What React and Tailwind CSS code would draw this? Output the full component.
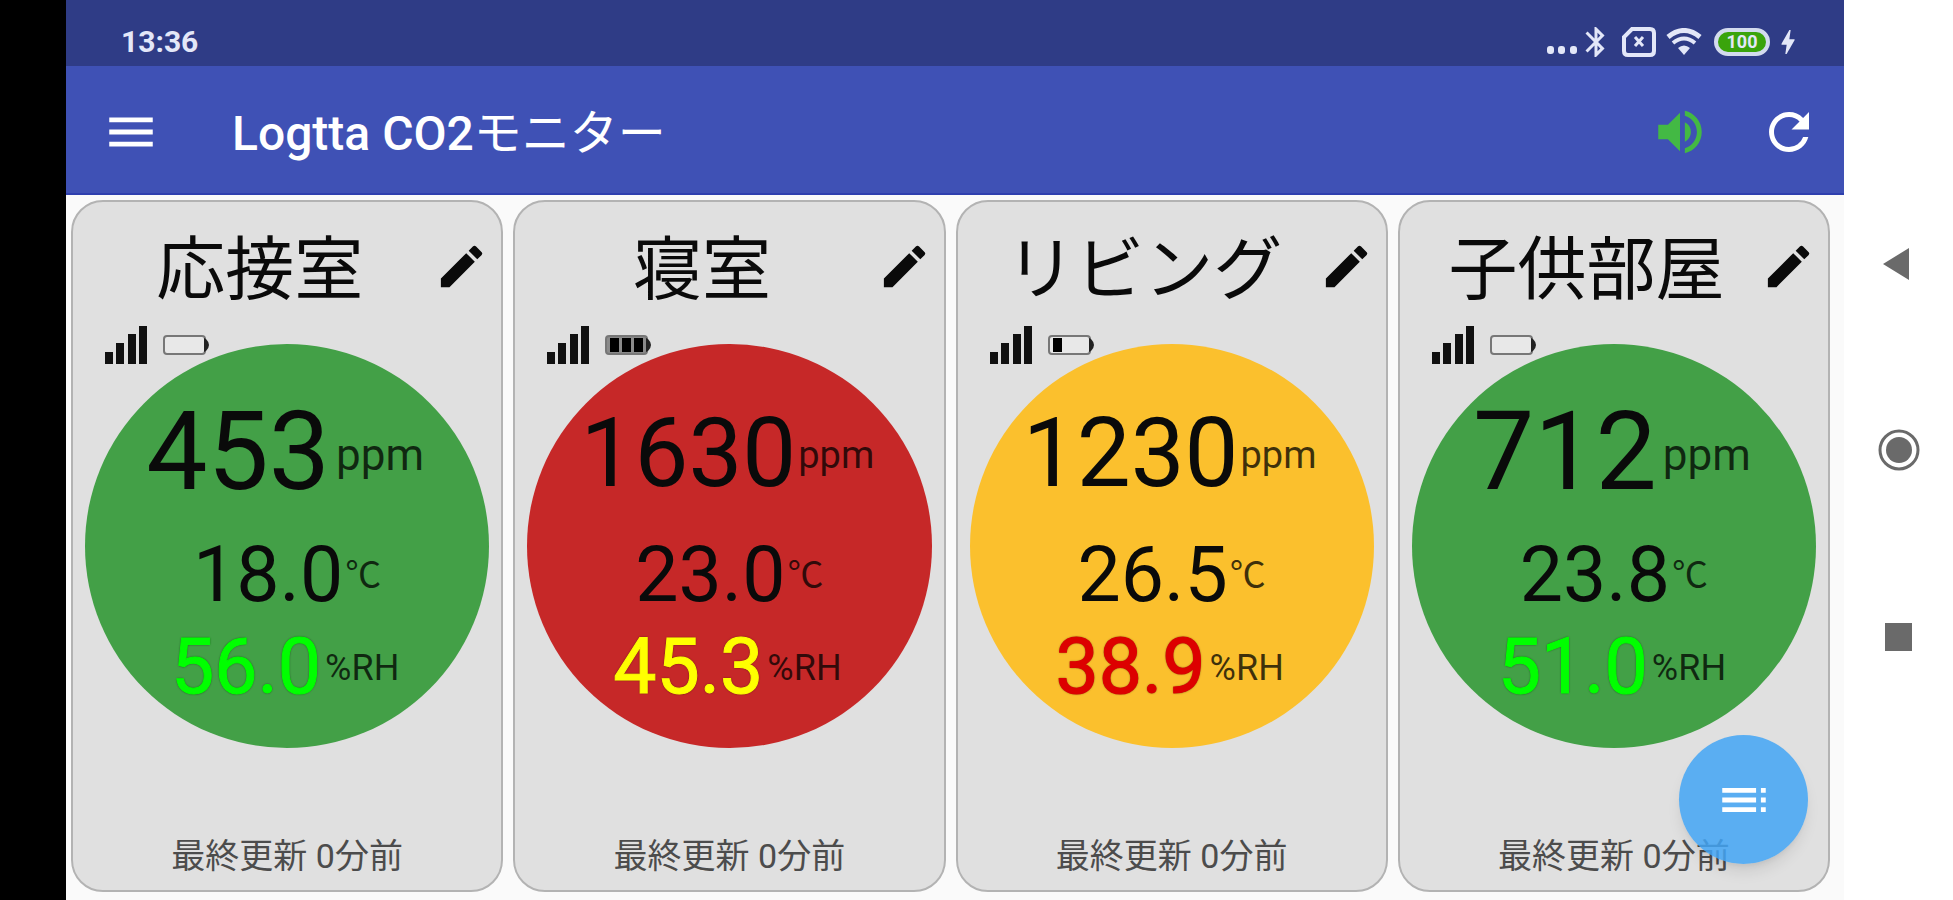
import React from 'react';
import { MdMenu, MdVolumeUp, MdRefresh, MdEdit, MdToc, MdBluetooth, MdBolt } from 'react-icons/md';

const rooms = [
  {
    name: '応接室',
    battery: 0,
    co2: '453',
    temperature: '18.0',
    humidity: '56.0',
    circle: 'bg-[#43a047]',
    humidityColor: 'text-[#00ff00]',
  },
  {
    name: '寝室',
    battery: 3,
    co2: '1630',
    temperature: '23.0',
    humidity: '45.3',
    circle: 'bg-[#c62828]',
    humidityColor: 'text-[#ffff00]',
  },
  {
    name: 'リビング',
    battery: 1,
    co2: '1230',
    temperature: '26.5',
    humidity: '38.9',
    circle: 'bg-[#fbc02d]',
    humidityColor: 'text-[#dd0000]',
  },
  {
    name: '子供部屋',
    battery: 0,
    co2: '712',
    temperature: '23.8',
    humidity: '51.0',
    circle: 'bg-[#43a047]',
    humidityColor: 'text-[#00ff00]',
  },
];

const SignalIcon = () => (
  <svg width="42" height="38" viewBox="0 0 42 38" fill="#111">
    <rect x="0" y="26" width="8" height="12" />
    <rect x="11" y="17" width="8" height="21" />
    <rect x="23" y="8" width="8" height="30" />
    <rect x="34" y="0" width="8" height="38" />
  </svg>
);

const BatteryIcon = ({ level }) => (
  <svg width="46" height="20" viewBox="0 0 46 20">
    <rect
      x="1"
      y="1"
      width="41"
      height="18"
      rx="3"
      fill={level === 3 ? '#8a8a8a' : '#e8e8e8'}
      stroke="#777"
      strokeWidth="2"
    />
    <path d="M41 3 L43 4 Q46 7 46 10 Q46 13 43 16 L41 17 Z" fill="#222" />
    {Array.from({ length: level }).map((_, i) => (
      <rect key={i} x={5 + i * 12} y="3" width="9" height="14" fill="#000" />
    ))}
  </svg>
);

const StatusBar = () => (
  <div className="flex h-[66px] items-center justify-between bg-[#2f3c86] pt-[18px] pr-[40px] pl-[55px] text-[#e3e7f8]">
    <span className="text-[30px] leading-none font-bold">13:36</span>
    <div className="flex items-center">
      <svg width="32" height="28" viewBox="0 0 32 28" fill="currentColor">
        <rect x="1" y="18" width="7" height="8" rx="3" />
        <rect x="12" y="18" width="7" height="8" rx="3" />
        <rect x="24" y="18" width="7" height="8" rx="3" />
      </svg>
      <MdBluetooth size={36} />
      <svg className="ml-2" width="34" height="30" viewBox="0 0 34 30" fill="none" stroke="currentColor">
        <path d="M10 2 H28 Q32 2 32 6 V24 Q32 28 28 28 H6 Q2 28 2 24 V10 Z" strokeWidth="4" />
        <path d="M13 10 L21 19 M21 10 L13 19" strokeWidth="3" />
      </svg>
      <svg className="ml-2.5" width="36" height="28" viewBox="0 0 36 28" fill="none" stroke="currentColor">
        <path d="M2 9 Q18 -4 34 9" strokeWidth="5" />
        <path d="M7 15 Q18 6 29 15" strokeWidth="4" />
        <path d="M12 20 Q18 15 24 20 L18 27 Z" fill="currentColor" stroke="none" />
      </svg>
      <div className="ml-3 flex h-[28px] w-[56px] items-center justify-center rounded-full border-4 border-[#d3dbee] bg-[#3aa40c] text-[18px] leading-none font-bold">
        100
      </div>
      <MdBolt className="ml-0.5" size={32} />
    </div>
  </div>
);

const AppBar = () => (
  <header className="flex h-[129px] items-center border-b-2 border-[#2e3fae] bg-[#3f51b5] pt-1 pr-[25px] pl-[36px] text-white">
    <button type="button" aria-label="メニュー">
      <MdMenu size={58} />
    </button>
    <h1 className="ml-[72px] flex-1 pt-1 text-[48px] leading-none font-medium">
      Logtta CO2<span className="font-normal">モニター</span>
    </h1>
    <button type="button" aria-label="音量" className="text-[#43b944]">
      <MdVolumeUp size={58} />
    </button>
    <button type="button" aria-label="更新" className="ml-[50px]">
      <MdRefresh size={60} />
    </button>
  </header>
);

const RoomCard = ({ room }) => {
  const wide = room.co2.length > 3;

  return (
    <article className="flex min-w-0 flex-1 flex-col rounded-[32px] border-2 border-[#b3b3b3] bg-[#e0e0e0] px-[12px] pt-[28px] pb-[12px]">
      <div className="flex items-center">
        <h2 className="flex-1 pt-1.5 text-center text-[69px] leading-[70px] whitespace-nowrap">{room.name}</h2>
        <button type="button" aria-label={`${room.name}を編集`} className="pb-1">
          <MdEdit size={55} />
        </button>
      </div>
      <div className="z-10 mt-5 flex items-center gap-4 pl-5">
        <SignalIcon />
        <BatteryIcon level={room.battery} />
      </div>
      <div className={`-mt-5 flex aspect-square w-full flex-col items-center rounded-full pt-12 ${room.circle}`}>
        <div className={`flex h-[122px] items-center pr-1 ${wide ? 'gap-0.5' : 'gap-1.5'}`}>
          <span className={wide ? 'text-[96px]' : 'text-[109px]'}>{room.co2}</span>
          <span className={`pt-1 text-black/75 ${wide ? 'text-[38px]' : 'text-[44px]'}`}>ppm</span>
        </div>
        <div className="mt-4 flex h-[92px] items-center gap-0.5">
          <span className="text-[77px]">{room.temperature}</span>
          <span className="text-[36px] text-black/75">℃</span>
        </div>
        <div className="flex h-[92px] items-center gap-1 pr-1">
          <span
            className={`text-[77px] [-webkit-text-stroke:1px_currentColor] [text-shadow:0_0_2px_rgb(0_0_0/0.8)] ${room.humidityColor}`}
          >
            {room.humidity}
          </span>
          <span className="text-[36px] text-black/75">%RH</span>
        </div>
      </div>
      <p className="mt-auto text-center text-[34px] leading-[44px] text-[#4c4c4c]">最終更新 0分前</p>
    </article>
  );
};

const NavBar = () => (
  <nav className="flex w-[109px] flex-col items-center justify-center gap-[145px] bg-white">
    <button type="button" aria-label="戻る">
      <svg width="42" height="42" viewBox="0 0 42 42">
        <path d="M5 22 L31 6 V38 Z" fill="#6a6a6a" />
      </svg>
    </button>
    <button type="button" aria-label="ホーム">
      <svg width="42" height="42" viewBox="0 0 42 42">
        <circle cx="21" cy="21" r="19" fill="none" stroke="#6a6a6a" strokeWidth="3" />
        <circle cx="21" cy="21" r="13" fill="#6a6a6a" />
      </svg>
    </button>
    <button type="button" aria-label="アプリ履歴">
      <svg width="42" height="42" viewBox="0 0 42 42">
        <rect x="7" y="7" width="27" height="28" fill="#6a6a6a" />
      </svg>
    </button>
  </nav>
);

const App = () => {
  return (
    <div className="flex min-h-screen bg-black pl-[66px] font-[Roboto,'Noto_Sans_CJK_JP',sans-serif] text-[#0a0a0a]">
      <div className="relative flex min-w-0 flex-1 flex-col bg-[#fafafa]">
        <StatusBar />
        <AppBar />
        <main className="flex flex-1 gap-[10px] pt-[5px] pr-[14px] pb-[8px] pl-[5px]">
          {rooms.map((room) => (
            <RoomCard key={room.name} room={room} />
          ))}
        </main>
        <button
          type="button"
          aria-label="一覧"
          className="absolute right-9 bottom-9 z-20 flex size-[129px] items-center justify-center rounded-full bg-[#42a5f5]/85 text-white shadow-lg"
        >
          <MdToc size={58} />
        </button>
      </div>
      <NavBar />
    </div>
  );
};

export default App;
